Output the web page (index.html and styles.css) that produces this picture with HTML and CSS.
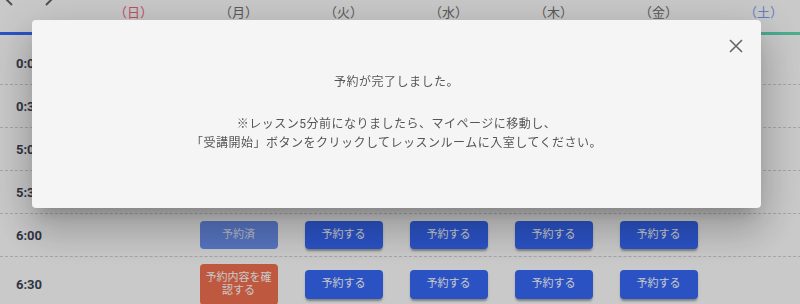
FILE: index.html
```html
<!DOCTYPE html>
<html lang="ja">
<head>
<meta charset="utf-8">
<title>予約</title>
<link rel="stylesheet" href="styles.css">
</head>
<body>
<div class="page">
  <div class="nav">
    <svg class="chev" width="10" height="14" viewBox="0 0 10 14"><polyline points="8,1 2,7 8,13" fill="none" stroke="#666" stroke-width="2"/></svg>
    <svg class="chev" width="10" height="14" viewBox="0 0 10 14"><polyline points="2,1 8,7 2,13" fill="none" stroke="#666" stroke-width="2"/></svg>
  </div>
  <div class="cal-head">
    <div></div>
    <div class="day sun">（日）</div>
    <div class="day">（月）</div>
    <div class="day">（火）</div>
    <div class="day">（水）</div>
    <div class="day">（木）</div>
    <div class="day">（金）</div>
    <div class="day sat">（土）</div>
  </div>
  <div class="rows">
    <div class="row"><div class="time">0:00</div></div>
    <div class="row"><div class="time">0:30</div></div>
    <div class="row"><div class="time">5:00</div></div>
    <div class="row"><div class="time">5:30</div></div>
    <div class="row">
      <div class="time">6:00</div>
      <div class="cell"></div>
      <div class="cell"><button class="btn done">予約済</button></div>
      <div class="cell"><button class="btn book">予約する</button></div>
      <div class="cell"><button class="btn book">予約する</button></div>
      <div class="cell"><button class="btn book">予約する</button></div>
      <div class="cell"><button class="btn book">予約する</button></div>
      <div class="cell"></div>
    </div>
    <div class="row tall">
      <div class="time">6:30</div>
      <div class="cell"></div>
      <div class="cell"><button class="btn confirm">予約内容を確認する</button></div>
      <div class="cell"><button class="btn book">予約する</button></div>
      <div class="cell"><button class="btn book">予約する</button></div>
      <div class="cell"><button class="btn book">予約する</button></div>
      <div class="cell"><button class="btn book">予約する</button></div>
      <div class="cell"></div>
    </div>
  </div>
</div>
<div class="overlay">
  <div class="dialog">
    <button class="close" aria-label="閉じる">
      <svg width="14" height="14" viewBox="0 0 14 14"><path d="M1 1L13 13M13 1L1 13" stroke="#666" stroke-width="1.6" fill="none"/></svg>
    </button>
    <p class="msg">予約が完了しました。</p>
    <p class="msg note">※レッスン5分前になりましたら、マイページに移動し、<br>「受講開始」ボタンをクリックしてレッスンルームに入室してください。</p>
  </div>
</div>
</body>
</html>
```
FILE: styles.css
```css
html, body {
  margin: 0;
  padding: 0;
  overflow: hidden;
  background: #ffffff;
  font-family: Roboto, "Noto Sans CJK JP", sans-serif;
}
.page {
  width: 816px;
}
.nav {
  display: flex;
  gap: 30px;
  height: 14px;
  margin-top: -8px;
  padding-left: 4px;
}
.chev { display: block; }
.cal-head {
  display: grid;
  grid-template-columns: 81px repeat(7, 105px);
  height: 26px;
  border-bottom: 3px solid transparent;
  border-image: linear-gradient(90deg, #3568fa 0%, #3a6ef5 10%, #56c8c0 85%, #62e2b2 100%) 1;
}
.day {
  text-align: center;
  font-size: 13px;
  line-height: 14px;
  color: #717171;
}
.day.sun { color: #f2677f; }
.day.sat { color: #7f9ff8; }
.rows {
  margin-top: 7px;
}
.row {
  display: grid;
  grid-template-columns: 81px repeat(7, 105px);
  align-items: center;
  height: 42px;
  border-bottom: 1px dashed #d2d2d2;
}
.row.tall {
  height: 55px;
  border-bottom: none;
}
.time {
  padding-left: 16px;
  font-size: 13px;
  font-weight: 700;
  color: #3e4558;
}
.cell {
  display: flex;
  justify-content: center;
}
.btn {
  width: 78px;
  padding: 8px 6px;
  border: none;
  border-radius: 4px;
  font-family: Roboto, "Noto Sans CJK JP", sans-serif;
  font-size: 11px;
  line-height: 12.5px;
  color: #ffffff;
  text-align: center;
}
.btn.book {
  background: #3668f8;
  box-shadow: 0 3px 2px -1px rgba(0,0,0,.25), 0 2px 3px 0 rgba(0,0,0,.14);
}
.btn.done {
  background: #6d92f2;
  color: rgba(255,255,255,.85);
}
.btn.confirm {
  background: #f27050;
}
.overlay {
  position: fixed;
  inset: 0;
  background: rgba(0,0,0,.21);
  display: flex;
  align-items: flex-start;
  padding: 20px 0 0 32px;
}
.dialog {
  position: relative;
  width: 729px;
  height: 188px;
  box-sizing: border-box;
  padding-bottom: 3px;
  background: #f5f5f5;
  border-radius: 4px;
  box-shadow: 0 11px 15px -7px rgba(0,0,0,.2), 0 24px 38px 3px rgba(0,0,0,.14), 0 9px 46px 8px rgba(0,0,0,.12);
  display: flex;
  flex-direction: column;
  justify-content: center;
  align-items: center;
}
.close {
  position: absolute;
  top: 19px;
  right: 18px;
  padding: 0;
  border: none;
  background: none;
  width: 14px;
  height: 14px;
}
.close svg { display: block; }
.msg {
  margin: 0;
  font-size: 12px;
  line-height: 18.5px;
  letter-spacing: 0.5px;
  color: #555555;
  text-align: center;
}
.msg.note {
  margin-top: 24px;
}
```
